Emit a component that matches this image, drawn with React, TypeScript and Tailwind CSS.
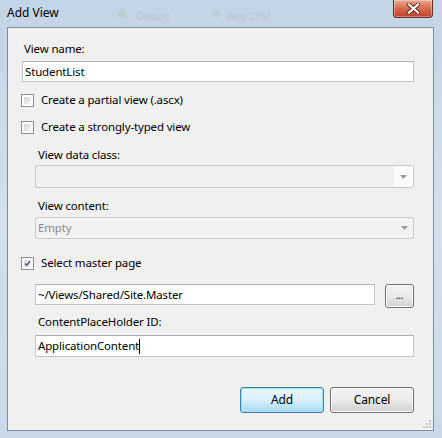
import React from "react";

const FONT = { fontFamily: '"Noto Sans", "Open Sans", sans-serif' };

function CheckBox({ checked = false }: { checked?: boolean }) {
  return (
    <div className="w-[13px] h-[13px] border border-[#8f8f8f] bg-white p-[2px] shrink-0">
      <div className="w-full h-full bg-gradient-to-br from-[#d4d4d4] to-[#f7f7f7] flex items-center justify-center">
        {checked && (
          <svg width="9" height="9" viewBox="0 0 9 9">
            <path d="M1.5 4.5 L3.6 6.8 L7.6 1.6" fill="none" stroke="#3f5a93" strokeWidth="1.8" />
          </svg>
        )}
      </div>
    </div>
  );
}

function CheckRow({ label, checked }: { label: string; checked?: boolean }) {
  return (
    <div className="flex items-center gap-[7px] h-4 -ml-[1px]">
      <CheckBox checked={checked} />
      <span className="text-[11.5px] tracking-[-0.15px] leading-4 text-black">{label}</span>
    </div>
  );
}

function Arrow() {
  return (
    <svg width="7" height="4" viewBox="0 0 7 4">
      <path d="M0 0 H7 L3.5 4 Z" fill="#9a9a9a" />
    </svg>
  );
}

export default function App() {
  return (
    <div
      className="w-[442px] h-[438px] overflow-hidden flex flex-col bg-gradient-to-b from-[#c3d4e6] via-[#d3e0ec] to-[#c9d9e9] select-none text-[11.5px] tracking-[-0.15px]"
      style={FONT}
    >
      {/* title bar */}
      <div className="relative h-[27px] shrink-0 flex items-start">
        <span className="absolute left-[118px] top-[10px] w-[8px] h-[8px] rounded-full bg-[#8fbf8a] opacity-25 blur-[1px]" />
        <span className="absolute left-[136px] top-[8px] text-[11px] text-[#7d8a96] opacity-25 blur-[1px]">Debug</span>
        <span className="absolute left-[212px] top-[10px] w-[7px] h-[7px] bg-[#a9b7c6] opacity-25 blur-[1px]" />
        <span className="absolute left-[227px] top-[8px] text-[11px] text-[#7d8a96] opacity-25 blur-[1px]">Any CPU</span>
        <span className="ml-[7px] mt-[5px] text-[12px] tracking-normal leading-4 text-black">Add View</span>
        <div className="absolute left-[393px] top-0 w-[40px] h-[18px] rounded-b-[4px] border border-t-0 border-[#6b2a1c] bg-gradient-to-b from-[#e9a791] via-[#d46a4f] to-[#c0412a] flex items-center justify-center shadow-[inset_0_0_0_1px_rgba(255,255,255,0.35)]">
          <svg width="13" height="11" viewBox="0 0 13 11">
            <path d="M2 1.5 L11 9.5 M11 1.5 L2 9.5" stroke="#5b2418" strokeWidth="4" strokeLinecap="square" />
            <path d="M2 1.5 L11 9.5 M11 1.5 L2 9.5" stroke="#ffffff" strokeWidth="2.2" strokeLinecap="square" />
          </svg>
        </div>
      </div>

      {/* client area */}
      <div className="relative ml-[7px] mr-[8px] mb-[7px] flex-1 border border-[#7f8d9c] bg-[#f0f0f0] pl-[14px] pr-[19px] flex flex-col">
        <span className="mt-[13px] ml-[2px] leading-4 text-black">View name:</span>
        <div className="mt-[4px] h-[21px] border border-[#c3c7cd] border-t-[#aeb2b8] bg-white flex items-center pl-[2px] text-black">
          StudentList
        </div>

        <div className="mt-[10px]">
          <CheckRow label="Create a partial view (.ascx)" />
        </div>
        <div className="mt-[11px]">
          <CheckRow label="Create a strongly-typed view" />
        </div>

        <div className="pl-[13px] flex flex-col">
          <span className="mt-[12px] ml-[3px] leading-4 text-black">View data class:</span>
          <div className="mt-[2px] h-[23px] rounded-[2px] border border-[#c9c9c9] bg-[#f0f0f0] flex items-stretch">
            <div className="flex-1" />
            <div className="w-[19px] bg-[#fbfbfb] flex items-center justify-center">
              <Arrow />
            </div>
          </div>

          <span className="mt-[10px] ml-[3px] leading-4 text-black">View content:</span>
          <div className="mt-[3px] h-[22px] rounded-[2px] border border-[#c9c9c9] bg-[#f2f2f2] flex items-center justify-between pl-[2px] pr-[5px]">
            <span className="text-[#8a8a8a]">Empty</span>
            <Arrow />
          </div>
        </div>

        <div className="mt-[16px]">
          <CheckRow label="Select master page" checked />
        </div>

        <div className="pl-[13px] flex flex-col">
          <div className="mt-[13px] flex items-start gap-[10px]">
            <div className="flex-1 h-[21px] border border-[#c3c7cd] border-t-[#aeb2b8] bg-white flex items-center pl-[2px] text-black">
              ~/Views/Shared/Site.Master
            </div>
            <div className="w-[29px] h-[24px] rounded-[3px] border border-[#707070] bg-gradient-to-b from-[#f3f3f3] via-[#e9e9e9] to-[#d3d3d3] flex items-center justify-center shadow-[inset_0_0_0_1px_#fcfcfc]">
              <span className="text-[10px] leading-none text-black -mt-[2px]">...</span>
            </div>
          </div>

          <span className="mt-[6px] ml-[3px] leading-4 text-black">ContentPlaceHolder ID:</span>
          <div className="mt-[5px] h-[22px] border border-[#c3c7cd] border-t-[#aeb2b8] bg-white flex items-center pl-[2px] text-black">
            ApplicationContent
            <span className="inline-block w-[1px] h-[15px] bg-black" />
          </div>
        </div>

        <div className="mt-[30px] flex justify-end gap-[6px]">
          <div className="w-[84px] h-[26px] rounded-[3px] border border-[#3c7fb1] bg-gradient-to-b from-[#eaf6fd] via-[#d9f0fc] to-[#a7d9f5] flex items-center justify-center shadow-[inset_0_0_0_1px_#9fe0fb]">
            <span className="text-[12px] text-black">Add</span>
          </div>
          <div className="w-[84px] h-[26px] rounded-[3px] border border-[#707070] bg-gradient-to-b from-[#f2f2f2] via-[#ebebeb] to-[#cfcfcf] flex items-center justify-center shadow-[inset_0_0_0_1px_#fcfcfc]">
            <span className="text-[12px] text-black">Cancel</span>
          </div>
        </div>

        {/* resize grip */}
        <svg className="absolute right-[1px] bottom-[1px]" width="10" height="10" viewBox="0 0 10 10">
          <g fill="#c4c4c4">
            <rect x="7" y="1" width="2" height="2" />
            <rect x="4" y="4" width="2" height="2" />
            <rect x="7" y="4" width="2" height="2" />
            <rect x="1" y="7" width="2" height="2" />
            <rect x="4" y="7" width="2" height="2" />
            <rect x="7" y="7" width="2" height="2" />
          </g>
        </svg>
      </div>
    </div>
  );
}
